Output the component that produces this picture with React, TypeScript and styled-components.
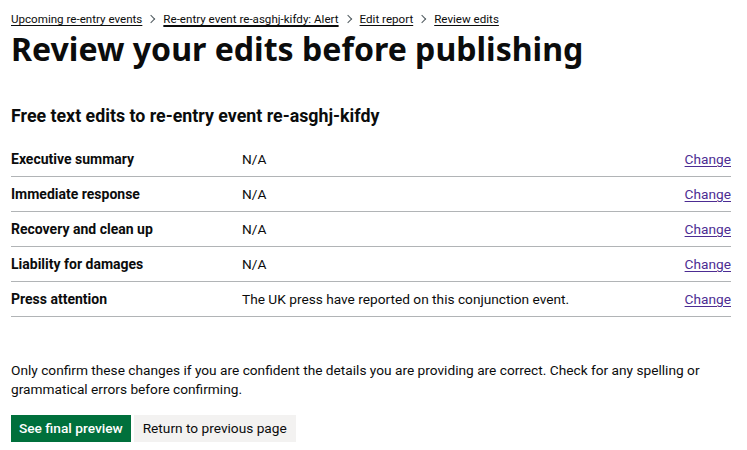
import React from "react";
import styled, { createGlobalStyle } from "styled-components";

const Global = createGlobalStyle`
  html, body { margin: 0; padding: 0; background: #ffffff; }
  body { font-family: Roboto, "Noto Sans", "Liberation Sans", Arial, sans-serif; color: #0b0c0c; }
`;

const Page = styled.main`
  padding: 10px 16px 0 11px;
`;

const Breadcrumbs = styled.ol`
  list-style: none;
  margin: 0;
  padding: 0;
  display: flex;
  align-items: center;
  font-size: 11.6px;
  line-height: 18px;
`;

const Crumb = styled.li`
  display: flex;
  align-items: center;
  & + &::before {
    content: "";
    display: inline-block;
    width: 5px;
    height: 5px;
    border-top: 1px solid #505a5f;
    border-right: 1px solid #505a5f;
    transform: rotate(45deg);
    margin: 0 9px 0 6px;
  }
`;

const CrumbLink = styled.a<{ $thick?: boolean }>`
  color: #0b0c0c;
  text-decoration: underline;
  text-underline-offset: 2px;
  text-decoration-thickness: ${(p) => (p.$thick ? "2px" : "1px")};
`;

const Title = styled.h1`
  margin: 2px 0 0;
  font-family: "Noto Sans", Roboto, Arial, sans-serif;
  font-size: 32.1px;
  line-height: 38px;
  font-weight: 700;
`;

const SubTitle = styled.h2`
  margin: 36px 0 0;
  font-size: 17.8px;
  line-height: 24px;
  font-weight: 700;
`;

const List = styled.dl`
  margin: 14px 0 0;
  padding: 0;
`;

const Row = styled.div`
  display: grid;
  grid-template-columns: 231px 1fr auto;
  align-items: center;
  height: 34px;
  border-bottom: 1px solid #b1b4b6;
  font-size: 13.7px;
`;

const Key = styled.dt`
  margin: 0;
  font-weight: 700;
  font-size: 14px;
`;

const Value = styled.dd`
  margin: 0;
`;

const Action = styled.dd`
  margin: 0;
`;

const ChangeLink = styled.a`
  color: #4c2c92;
  text-decoration: underline;
  text-underline-offset: 2px;
`;

const Note = styled.p`
  margin: 44px 0 0;
  font-size: 13.7px;
  line-height: 19px;
`;

const Buttons = styled.div`
  display: flex;
  gap: 3px;
  margin-top: 16px;
`;

const Button = styled.button<{ $primary?: boolean }>`
  font-family: inherit;
  font-size: 13.7px;
  line-height: 17px;
  padding: 5px ${(p) => (p.$primary ? "8px" : "9px")};
  border: none;
  border-radius: 0;
  cursor: pointer;
  color: ${(p) => (p.$primary ? "#ffffff" : "#0b0c0c")};
  background: ${(p) => (p.$primary ? "#00703c" : "#f3f2f1")};
  box-shadow: 0 2px 0 ${(p) => (p.$primary ? "#002d18" : "#929191")};
  font-weight: ${(p) => (p.$primary ? 500 : 400)};
`;

const rows = [
  { key: "Executive summary", value: "N/A" },
  { key: "Immediate response", value: "N/A" },
  { key: "Recovery and clean up", value: "N/A" },
  { key: "Liability for damages", value: "N/A" },
  { key: "Press attention", value: "The UK press have reported on this conjunction event." },
];

export default function App() {
  return (
    <>
      <Global />
      <Page>
        <Breadcrumbs>
          <Crumb><CrumbLink href="#">Upcoming re-entry events</CrumbLink></Crumb>
          <Crumb><CrumbLink href="#" $thick>Re-entry event re-asghj-kifdy: Alert</CrumbLink></Crumb>
          <Crumb><CrumbLink href="#">Edit report</CrumbLink></Crumb>
          <Crumb><CrumbLink href="#">Review edits</CrumbLink></Crumb>
        </Breadcrumbs>
        <Title>Review your edits before publishing</Title>
        <SubTitle>Free text edits to re-entry event re-asghj-kifdy</SubTitle>
        <List>
          {rows.map((r) => (
            <Row key={r.key}>
              <Key>{r.key}</Key>
              <Value>{r.value}</Value>
              <Action><ChangeLink href="#">Change</ChangeLink></Action>
            </Row>
          ))}
        </List>
        <Note>
          Only confirm these changes if you are confident the details you are providing are correct. Check for any spelling or grammatical errors before confirming.
        </Note>
        <Buttons>
          <Button $primary>See final preview</Button>
          <Button>Return to previous page</Button>
        </Buttons>
      </Page>
    </>
  );
}
